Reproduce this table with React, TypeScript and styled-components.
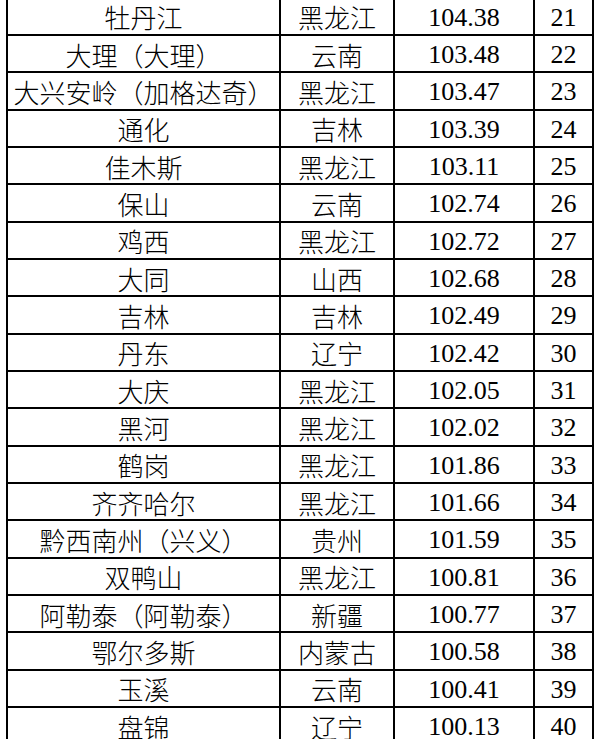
import React from "react";
import styled, { createGlobalStyle } from "styled-components";

const Global = createGlobalStyle`
  html, body { margin: 0; padding: 0; background: #fff; overflow: hidden; }
`;

const Table = styled.div`
  display: grid;
  grid-template-columns: 271px 112px 138px 57px;
  grid-auto-rows: 35.33px;
  gap: 2px;
  padding: 2px;
  background: #000;
  width: max-content;
  margin-left: 6px;
  margin-top: -3.33px;
`;

const TextCell = styled.div`
  background: #fff;
  color: #000;
  display: flex;
  align-items: center;
  justify-content: center;
  padding-top: 2px;
  box-sizing: border-box;
  white-space: nowrap;
  font-size: 26px;
  line-height: 1;
  font-family: "Noto Sans CJK SC", "Noto Sans", sans-serif;
  font-weight: 300;
`;

const NumCell = styled.div`
  background: #fff;
  color: #000;
  display: flex;
  align-items: center;
  justify-content: center;
  padding-top: 3px;
  box-sizing: border-box;
  white-space: nowrap;
  font-size: 26px;
  line-height: 1;
  font-family: "Liberation Serif", "Times New Roman", serif;
  font-weight: 400;
`;

const rows: [string, string, string, string][] = [
  ["牡丹江", "黑龙江", "104.38", "21"],
  ["大理（大理）", "云南", "103.48", "22"],
  ["大兴安岭（加格达奇）", "黑龙江", "103.47", "23"],
  ["通化", "吉林", "103.39", "24"],
  ["佳木斯", "黑龙江", "103.11", "25"],
  ["保山", "云南", "102.74", "26"],
  ["鸡西", "黑龙江", "102.72", "27"],
  ["大同", "山西", "102.68", "28"],
  ["吉林", "吉林", "102.49", "29"],
  ["丹东", "辽宁", "102.42", "30"],
  ["大庆", "黑龙江", "102.05", "31"],
  ["黑河", "黑龙江", "102.02", "32"],
  ["鹤岗", "黑龙江", "101.86", "33"],
  ["齐齐哈尔", "黑龙江", "101.66", "34"],
  ["黔西南州（兴义）", "贵州", "101.59", "35"],
  ["双鸭山", "黑龙江", "100.81", "36"],
  ["阿勒泰（阿勒泰）", "新疆", "100.77", "37"],
  ["鄂尔多斯", "内蒙古", "100.58", "38"],
  ["玉溪", "云南", "100.41", "39"],
  ["盘锦", "辽宁", "100.13", "40"],
];

export default function App() {
  return (
    <>
      <Global />
      <Table>
        {rows.map((r, i) => (
          <React.Fragment key={i}>
            <TextCell>{r[0]}</TextCell>
            <TextCell>{r[1]}</TextCell>
            <NumCell>{r[2]}</NumCell>
            <NumCell>{r[3]}</NumCell>
          </React.Fragment>
        ))}
      </Table>
    </>
  );
}
